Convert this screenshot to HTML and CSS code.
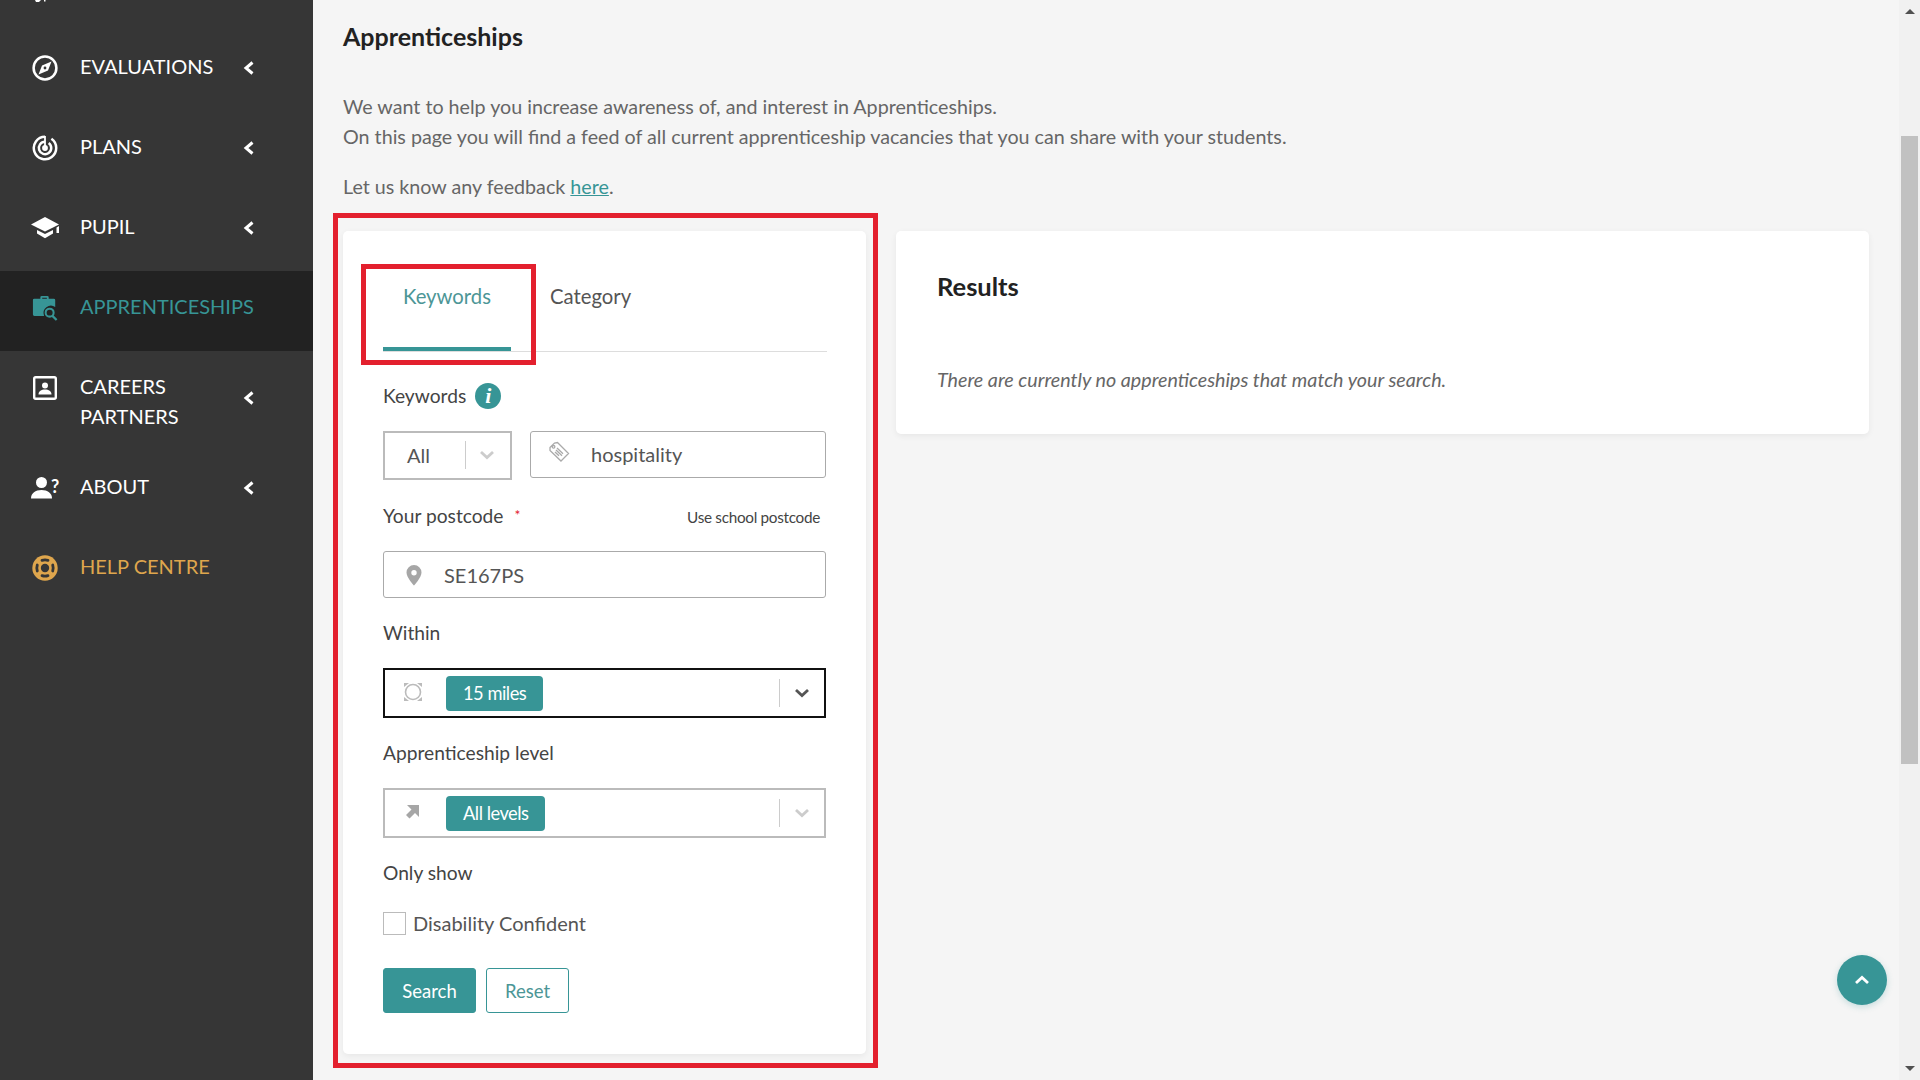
FILE: index.html
```html
<!DOCTYPE html>
<html lang="en">
<head>
    <meta charset="UTF-8">
    <title>Apprenticeships</title>
    <link rel="stylesheet" href="styles.css">
</head>
<body>
    <nav class="sidebar">
        <svg class="nav-stub" viewBox="0 0 14 2"><path fill="#fff" d="M1 0h6l-2 2H2zM10 0h1.500v1.500H10z"/></svg>
        <a class="nav-item">
            <svg class="nav-icon" viewBox="0 0 26 26"><circle cx="13" cy="13" r="11.400" fill="none" stroke="#fff" stroke-width="2.500"/><path fill="#fff" fill-rule="evenodd" d="M19.500 6.500L16 15.500 6.500 19.500 10 10.500zM13 11.600a1.400 1.400 0 1 0 0 2.800 1.400 1.400 0 0 0 0-2.800z"/></svg>
            <span class="nav-label">Evaluations</span>
            <svg class="nav-arrow" viewBox="0 0 12 14"><path d="M9.500 1.500L3 7l6.500 5.500" fill="none" stroke="#fff" stroke-width="3"/></svg>
        </a>
        <a class="nav-item">
            <svg class="nav-icon" viewBox="0 0 26 26"><g fill="none" stroke="#fff" stroke-width="2.500"><path d="M19.400 3.800A11.200 11.200 0 1 1 13 1.800"/><path d="M16.700 8A6.200 6.200 0 1 1 13 6.800"/></g><path fill="#fff" d="M12.100 1h1.800v12h-1.800z"/><circle cx="13" cy="13" r="2.900" fill="#fff"/></svg>
            <span class="nav-label">Plans</span>
            <svg class="nav-arrow" viewBox="0 0 12 14"><path d="M9.500 1.500L3 7l6.500 5.500" fill="none" stroke="#fff" stroke-width="3"/></svg>
        </a>
        <a class="nav-item">
            <svg class="nav-icon nav-icon-wide" viewBox="0 0 30 26"><path fill="#fff" d="M15 2L1 9.500l14 7 14-7zM7 15v3.600l8 4.600 8-4.600V15l-8 4zM26.500 12.400l2.500-1.300v7h-2.500z"/></svg>
            <span class="nav-label">Pupil</span>
            <svg class="nav-arrow" viewBox="0 0 12 14"><path d="M9.500 1.500L3 7l6.500 5.500" fill="none" stroke="#fff" stroke-width="3"/></svg>
        </a>
        <a class="nav-item nav-item-active">
            <svg class="nav-icon nav-icon-wide" viewBox="0 0 30 28"><path fill="#379596" fill-rule="evenodd" d="M10 4V2.500A1.500 1.500 0 0 1 11.500 1h6A1.500 1.500 0 0 1 19 2.500V4h5.500A1.500 1.500 0 0 1 26 5.500V13a8 8 0 0 0-12 9.500H3.500A1.500 1.500 0 0 1 2 21V5.500A1.500 1.500 0 0 1 3.500 4zm2 0h5V3h-5z"/><circle cx="20" cy="19" r="4.300" fill="none" stroke="#379596" stroke-width="2.200"/><path d="M23 22.500l4.500 4.500" stroke="#379596" stroke-width="2.400"/></svg>
            <span class="nav-label">Apprenticeships</span>
        </a>
        <a class="nav-item nav-item-tall">
            <svg class="nav-icon" viewBox="0 0 26 26"><rect x="2.200" y="2.200" width="21.600" height="21.600" rx="1.500" fill="none" stroke="#fff" stroke-width="2.400"/><circle cx="13" cy="10.500" r="3" fill="#fff"/><path fill="#fff" d="M6.500 19.500c0-3.300 2.800-5 6.500-5s6.500 1.700 6.500 5z"/></svg>
            <span class="nav-label">Careers<br>Partners</span>
            <svg class="nav-arrow" viewBox="0 0 12 14"><path d="M9.500 1.500L3 7l6.500 5.500" fill="none" stroke="#fff" stroke-width="3"/></svg>
        </a>
        <a class="nav-item">
            <svg class="nav-icon nav-icon-wide" viewBox="0 0 30 26"><circle cx="11.500" cy="7.500" r="5.500" fill="#fff"/><path fill="#fff" d="M1 23.500c0-5.500 4.500-8.500 10.500-8.500S22 18 22 23.500z"/><text x="21" y="18" class="about-mark">?</text></svg>
            <span class="nav-label">About</span>
            <svg class="nav-arrow" viewBox="0 0 12 14"><path d="M9.500 1.500L3 7l6.500 5.500" fill="none" stroke="#fff" stroke-width="3"/></svg>
        </a>
        <a class="nav-item nav-item-help">
            <svg class="nav-icon" viewBox="0 0 26 26"><circle cx="13" cy="13" r="12.700" fill="#dfa64d"/><circle cx="13" cy="13" r="4.200" fill="#363636"/><g fill="none" stroke="#363636" stroke-width="2.800" stroke-linecap="round"><path d="M10 5.300Q13 4.300 16 5.300M10 20.700Q13 21.700 16 20.700M5.300 10Q4.300 13 5.300 16M20.700 10Q21.700 13 20.700 16"/></g></svg>
            <span class="nav-label">Help Centre</span>
        </a>
    </nav>

    <main class="main">
        <h1 class="page-title">Apprenticeships</h1>
        <p class="intro">We want to help you increase awareness of, and interest in Apprenticeships.<br>On this page you will find a feed of all current apprenticeship vacancies that you can share with your students.</p>
        <p class="feedback">Let us know any feedback <a href="#">here</a>.</p>

        <div class="columns">
            <section class="card filter-card">
                <div class="highlight highlight-card"></div>
                <div class="tabs">
                    <div class="tab tab-active">Keywords</div>
                    <div class="tab">Category</div>
                    <div class="highlight highlight-tab"></div>
                </div>

                <div class="field-label label-first">Keywords
                    <span class="info-dot">i</span>
                </div>
                <div class="keyword-row">
                    <div class="control select-small">
                        <span class="select-value">All</span>
                        <span class="select-sep"></span>
                        <svg class="chevron" viewBox="0 0 16 10"><path d="M2 2l6 5.500L14 2" fill="none" stroke="#ccc" stroke-width="2.800"/></svg>
                    </div>
                    <div class="control input-box">
                        <svg class="field-icon field-icon-tag" viewBox="0 0 24 24"><path d="M3 7.500L7.500 3l3-.5L21.500 13.500 14 21 3 10.500zM6.500 5.500a1.300 1.300 0 1 0 .1 0zM10 8l6 5.700M9 10l6 5.700M8 12l4 3.800" fill="none" stroke="#aaa" stroke-width="1.300"/></svg>
                        <span class="input-value">hospitality</span>
                    </div>
                </div>

                <div class="field-label label-split">
                    <span>Your postcode <span class="required">*</span></span>
                    <a class="school-link">Use school postcode</a>
                </div>
                <div class="control input-box input-wide">
                    <svg class="field-icon" viewBox="0 0 24 24"><path fill="#a6a6a6" fill-rule="evenodd" d="M12 2a7.500 7.500 0 0 0-7.500 7.500C4.500 14.500 12 22.500 12 22.500s7.500-8 7.500-13A7.500 7.500 0 0 0 12 2zm0 5a2.700 2.700 0 1 1 0 5.400A2.700 2.700 0 0 1 12 7z"/></svg>
                    <span class="input-value">SE167PS</span>
                </div>

                <div class="field-label">Within</div>
                <div class="control select-wide select-focus">
                    <svg class="field-icon" viewBox="0 0 24 24"><circle cx="12" cy="12" r="7.500" fill="none" stroke="#bbb" stroke-width="1.600"/><path fill="#bbb" d="M3 3h5L3 7zM21 3h-5l5 4zM3 21h5l-5-4zM21 21h-5l5-4z"/></svg>
                    <span class="chip">15 miles</span>
                    <span class="select-sep select-sep-wide"></span>
                    <svg class="chevron" viewBox="0 0 16 10"><path d="M2 2l6 5.500L14 2" fill="none" stroke="#555" stroke-width="2.800"/></svg>
                </div>

                <div class="field-label">Apprenticeship level</div>
                <div class="control select-wide">
                    <svg class="field-icon" viewBox="0 0 24 24"><path fill="#a6a6a6" d="M6 5h12v12l-4-4-5.500 5.500-3.500-3.500 5.500-5.500z"/></svg>
                    <span class="chip">All levels</span>
                    <span class="select-sep select-sep-wide"></span>
                    <svg class="chevron" viewBox="0 0 16 10"><path d="M2 2l6 5.500L14 2" fill="none" stroke="#ccc" stroke-width="2.800"/></svg>
                </div>

                <div class="field-label">Only show</div>
                <label class="check-row">
                    <span class="check-box"></span>
                    Disability Confident
                </label>

                <div class="actions">
                    <button class="btn btn-primary">Search</button>
                    <button class="btn btn-outline">Reset</button>
                </div>
            </section>

            <section class="card results-card">
                <h2 class="results-title">Results</h2>
                <p class="results-empty">There are currently no apprenticeships that match your search.</p>
            </section>
        </div>

        <button class="to-top">
            <svg viewBox="0 0 16 10"><path d="M2 8l6-5.500L14 8" fill="none" stroke="#fff" stroke-width="2.800"/></svg>
        </button>
    </main>

    <div class="scrollbar">
        <span class="scroll-up"></span>
        <div class="scroll-track"><div class="scroll-thumb"></div></div>
        <span class="scroll-down"></span>
    </div>
</body>
</html>
```

FILE: styles.css
```css
* {
    box-sizing: border-box;
}
body {
    margin: 0;
    display: flex;
    height: 1080px;
    overflow: hidden;
    font-family: Lato, "Open Sans", sans-serif;
    font-size: 19.7px;
    line-height: 30px;
    color: #666;
    background-color: #f5f5f5;
}
.sidebar {
    width: 313px;
    flex-shrink: 0;
    background-color: #363636;
}
.nav-stub {
    display: block;
    width: 14px;
    height: 2px;
    margin: 0 0 29px 34px;
}
.nav-item {
    display: flex;
    align-items: flex-start;
    height: 80px;
    padding: 20px 0 0 32px;
    color: #fff;
    text-transform: uppercase;
    font-size: 20px;
}
.nav-item-active {
    background-color: #222222;
    color: #379596;
}
.nav-item-tall {
    height: 100px;
}
.nav-item-help {
    color: #dfa64d;
}
.nav-icon {
    width: 26px;
    height: 26px;
    margin-top: 4px;
    flex-shrink: 0;
}
.nav-icon-wide {
    width: 30px;
    margin-left: -2px;
    margin-right: -2px;
}
.about-mark {
    font-family: Lato, sans-serif;
    font-size: 18px;
    font-weight: 700;
    fill: #fff;
}
.nav-label {
    margin-left: 22px;
    width: 166px;
    white-space: nowrap;
}
.nav-arrow {
    width: 12px;
    height: 14px;
    margin-left: -3px;
    margin-top: 10px;
    flex-shrink: 0;
}
.nav-item-tall .nav-arrow {
    margin-top: 20px;
}
.main {
    flex: 1;
    position: relative;
    padding-left: 30px;
}
.page-title {
    margin: 0;
    padding-top: 19px;
    font-size: 25px;
    line-height: 34px;
    font-weight: 700;
    color: #222;
}
.intro {
    margin: 39px 0 0;
}
.feedback {
    margin: 20px 0 0;
}
.feedback a {
    color: #379596;
}
.columns {
    display: flex;
    align-items: flex-start;
    gap: 30px;
    margin-top: 29px;
}
.card {
    position: relative;
    background-color: #fff;
    border-radius: 5px;
    box-shadow: 0 2px 6px rgba(0, 0, 0, 0.06);
}
.filter-card {
    width: 523px;
    height: 823px;
    padding: 30px 39px 0 40px;
    flex-shrink: 0;
}
.highlight {
    position: absolute;
    border: 5px solid #e3202e;
}
.highlight-card {
    left: -10px;
    top: -18px;
    width: 545px;
    height: 855px;
}
.tabs {
    position: relative;
    display: flex;
    gap: 19px;
    height: 91px;
    border-bottom: 1px solid #ddd;
}
.highlight-tab {
    left: -22px;
    top: 3px;
    width: 175px;
    height: 101px;
}
.tab {
    padding: 20px 20px 0;
    height: 90px;
    font-size: 20.300px;
    color: #555;
}
.tab-active {
    color: #4c9696;
    border-bottom: 4px solid #379596;
}
.field-label {
    height: 30px;
    margin-top: 20px;
    margin-bottom: 20px;
    font-size: 19.2px;
    color: #444;
}
.label-first {
    margin-top: 29px;
    display: flex;
    align-items: center;
    gap: 9px;
}
.label-split {
    display: flex;
    justify-content: space-between;
    align-items: center;
    margin-top: 20px;
    margin-bottom: 21px;
    padding-right: 7px;
}
.required {
    color: #e3202e;
    margin-left: 6px;
    font-size: 14px;
    vertical-align: 3px;
}
.school-link {
    font-size: 15.300px;
    letter-spacing: -0.3px;
    padding-top: 3px;
    color: #444;
}
.info-dot {
    display: flex;
    align-items: center;
    justify-content: center;
    width: 26px;
    height: 26px;
    border-radius: 50%;
    background-color: #379596;
    color: #fff;
    font-family: "Liberation Serif", serif;
    font-style: italic;
    font-weight: 700;
    font-size: 22px;
}
.keyword-row {
    display: flex;
    align-items: flex-start;
    gap: 18px;
}
.control {
    display: flex;
    align-items: center;
    background-color: #fff;
    border: 1px solid #aaa;
}
.select-small {
    width: 129px;
    height: 49px;
    padding: 0 0 2px 22px;
    border-width: 2px;
    border-color: #bbb;
}
.select-value {
    width: 58px;
    font-size: 20px;
    color: #555;
}
.select-sep {
    width: 1px;
    height: 28px;
    background-color: #ccc;
}
.select-small .chevron {
    margin-left: 13px;
}
.chevron {
    width: 16px;
    height: 10px;
    flex-shrink: 0;
}
.input-box {
    border-radius: 3px;
    height: 47px;
}
.keyword-row .input-box {
    width: 296px;
    padding-bottom: 2px;
}
.input-wide {
    width: 443px;
}
.field-icon {
    width: 24px;
    height: 24px;
    margin-left: 18px;
    flex-shrink: 0;
}
.field-icon-tag {
    margin-left: 16px;
    margin-top: -3px;
    margin-right: 2px;
}
.input-value {
    margin-left: 18px;
    font-size: 20px;
    color: #555;
}
.select-wide {
    width: 443px;
    height: 50px;
    border: 2px solid #bbb;
}
.select-focus {
    border-color: #111;
}
.select-wide .field-icon {
    margin-left: 16px;
    margin-top: -3px;
}
.chip {
    margin-left: 21px;
    height: 35px;
    padding: 0 17px;
    line-height: 35px;
    border-radius: 4px;
    background-color: #379596;
    color: #fff;
    font-size: 18.300px;
    letter-spacing: -0.5px;
}
.select-sep-wide {
    margin-left: auto;
}
.select-wide .chevron {
    margin: 0 14px;
}
.check-row {
    display: flex;
    align-items: center;
    gap: 7px;
    height: 30px;
    margin-top: 1px;
    font-size: 20px;
    color: #555;
}
.check-box {
    width: 23px;
    height: 23px;
    border: 1px solid #bbb;
}
.actions {
    display: flex;
    gap: 10px;
    margin-top: 30px;
}
.btn {
    height: 45px;
    font-family: Lato, sans-serif;
    font-size: 18.500px;
    border-radius: 3px;
}
.btn-primary {
    width: 93px;
    background-color: #379596;
    border: 1px solid #379596;
    color: #fff;
}
.btn-outline {
    width: 83px;
    background-color: #fff;
    border: 1px solid #379596;
    color: #4c9696;
}
.results-card {
    width: 973px;
    height: 203px;
    padding: 37px 41px;
}
.results-title {
    margin: 0;
    font-size: 25.500px;
    line-height: 36px;
    font-weight: 700;
    color: #222;
}
.results-empty {
    margin: 61px 0 0;
    font-style: italic;
}
.to-top {
    position: absolute;
    left: 1524px;
    top: 955px;
    width: 50px;
    height: 50px;
    border: none;
    border-radius: 50%;
    background-color: #379596;
    box-shadow: 0 2px 6px rgba(55, 149, 150, 0.25);
}
.to-top svg {
    width: 16px;
    height: 10px;
    display: block;
    margin: 0 auto;
}
.scrollbar {
    width: 21px;
    flex-shrink: 0;
    display: flex;
    flex-direction: column;
    align-items: center;
    background-color: #f1f1f1;
}
.scroll-up, .scroll-down {
    width: 0;
    height: 0;
    border-left: 5px solid transparent;
    border-right: 5px solid transparent;
}
.scroll-up {
    margin-top: 9px;
    border-bottom: 5px solid #505050;
}
.scroll-track {
    flex: 1;
    width: 17px;
    padding-top: 122px;
}
.scroll-thumb {
    height: 628px;
    background-color: #c1c1c1;
}
.scroll-down {
    margin-bottom: 9px;
    border-top: 5px solid #505050;
}
```
